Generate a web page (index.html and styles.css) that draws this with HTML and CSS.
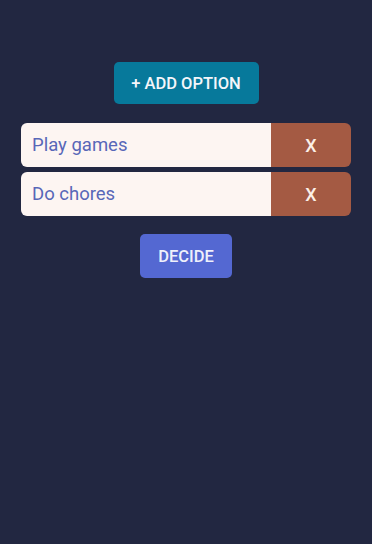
FILE: index.html
```html
<!DOCTYPE html>
<html>
<head>
<meta charset="utf-8">
<link rel="stylesheet" href="styles.css">
</head>
<body>
<div class="app">
  <button class="add">+ ADD OPTION</button>
  <div class="list">
    <div class="row">
      <div class="field">Play games</div>
      <button class="remove">X</button>
    </div>
    <div class="row">
      <div class="field">Do chores</div>
      <button class="remove">X</button>
    </div>
  </div>
  <button class="decide">DECIDE</button>
</div>
</body>
</html>
```
FILE: styles.css
```css
html, body {
  margin: 0;
  padding: 0;
  background: #222741;
  height: 100%;
}
body {
  font-family: Roboto, "Liberation Sans", sans-serif;
}
.app {
  display: flex;
  flex-direction: column;
  align-items: center;
  padding-top: 62px;
}
button {
  font-family: Roboto, "Liberation Sans", sans-serif;
  border: none;
  cursor: pointer;
}
.add {
  width: 145px;
  height: 42px;
  border-radius: 5px;
  background: #07799b;
  color: #f4f6fa;
  font-size: 16.5px;
  font-weight: 500;
}
.list {
  margin-top: 19px;
  width: 330px;
  display: flex;
  flex-direction: column;
  gap: 5px;
}
.row {
  display: flex;
  height: 44px;
  border-radius: 6px;
  overflow: hidden;
}
.field {
  flex: 1;
  background: #fdf5f2;
  color: #5867b8;
  font-size: 18.5px;
  display: flex;
  align-items: center;
  padding-left: 11px;
}
.remove {
  width: 80px;
  background: #a45a43;
  color: #fbefe7;
  font-size: 18px;
  font-weight: 500;
}
.decide {
  margin-top: 18px;
  width: 92px;
  height: 44px;
  border-radius: 5px;
  background: #5468d2;
  color: #eef0fb;
  font-size: 16.5px;
  font-weight: 500;
}
```
